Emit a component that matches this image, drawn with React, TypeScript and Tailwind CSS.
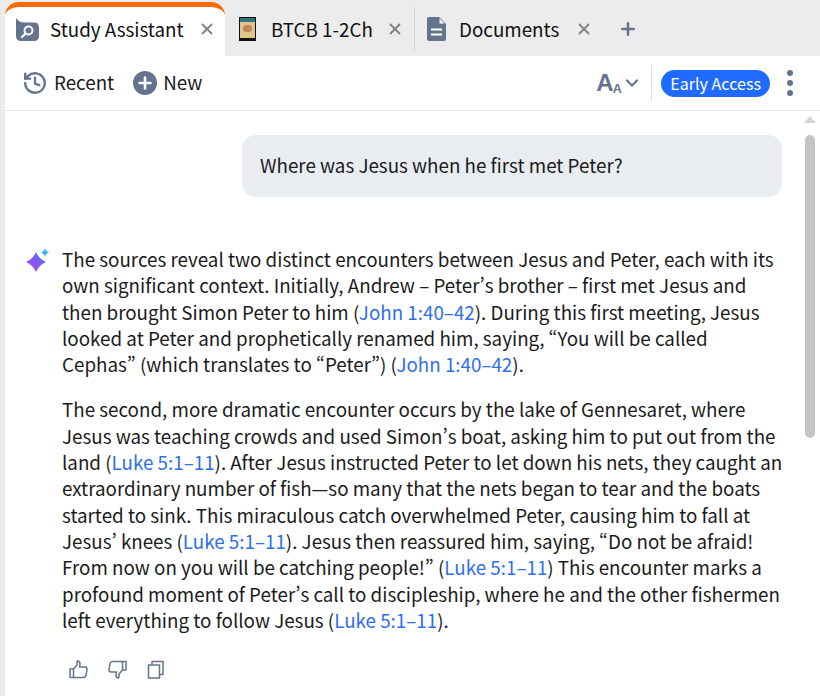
import { Plus, X, ChevronDown } from 'lucide-react';

const link = 'text-[#2f6fed]';

function Tab({ icon, label, width, last }: { icon: React.ReactNode; label: string; width: string; last?: boolean }) {
  return (
    <div className={`flex h-[44px] items-center ${width} ${last ? '' : 'border-r border-[#d0d0d0]'} self-center`}>
      <div className="flex w-full items-center">
        {icon}
        <span className="text-[18.8px] leading-none text-[#111]">{label}</span>
        <X className="ml-auto mr-[10px] shrink-0 text-[#808080]" size={18} strokeWidth={2.4} />
      </div>
    </div>
  );
}

export default function App() {
  return (
    <div className="h-[696px] w-[820px] overflow-hidden bg-[#ececec] font-['Noto_Sans_CJK_SC','Liberation_Sans',sans-serif] text-[#1b1b1b] [font-feature-settings:'pwid']">
      {/* tab strip */}
      <div className="flex h-[56px] items-end pl-[5px] pt-[2px]">
        <div className="flex h-[54px] w-[220px] shrink-0 items-center rounded-t-[14px] border-t-[5px] border-[#ff6a00] bg-white pb-[5px]">
          <svg className="ml-[10px] mr-[10px] mt-[1px] shrink-0" width="25" height="25" viewBox="0 0 25 25">
            <path fill="#64748f" d="M1 1 C3 4 6 5.5 9 5.5 H19 Q24 5.5 24 10.5 V19 Q24 24 19 24 H6 Q1 24 1 19 Z" />
            <circle cx="13.5" cy="13.5" r="4" fill="none" stroke="#fff" strokeWidth="2" />
            <path d="M10.5 16.5 L7 20" stroke="#fff" strokeWidth="2.2" strokeLinecap="round" />
          </svg>
          <span className="text-[18.8px] leading-none text-[#111]">Study Assistant</span>
          <X className="ml-auto mr-[9px] shrink-0 text-[#808080]" size={18} strokeWidth={2.4} />
        </div>
        <div className="flex h-[54px] flex-1 items-center">
          <Tab
            width="w-[190px]"
            label="BTCB 1-2Ch"
            icon={
              <span className="ml-[14px] mr-[15px] flex h-[24px] w-[17px] shrink-0 flex-col bg-[#111] p-[1px]">
                <span className="flex h-[20px] flex-col items-center bg-[#e3c48a]">
                  <span className="h-[4px] w-full bg-[#2f7482]" />
                  <span className="mt-[3px] h-[7px] w-[9px] rounded-full bg-[#c0865a]" />
                </span>
              </span>
            }
          />
          <Tab
            last
            width="w-[188px]"
            label="Documents"
            icon={
              <svg className="ml-[12px] mr-[13px] shrink-0" width="19" height="24" viewBox="0 0 19 24">
                <path fill="#64748f" d="M2 0 H12 L19 7 V22 Q19 24 17 24 H2 Q0 24 0 22 V2 Q0 0 2 0 Z" />
                <path fill="#fff" d="M12.5 1.5 L17.5 6.5 H12.5 Z" />
                <path d="M4 12.5 H15 M4 17.5 H15" stroke="#fff" strokeWidth="2" />
              </svg>
            }
          />
          <Plus className="ml-[15px] shrink-0 text-[#64748f]" size={20} strokeWidth={3} />
        </div>
      </div>

      <div className="ml-[5px] h-[640px] bg-white">
        {/* toolbar */}
        <div className="flex h-[55px] items-center border-b border-[#e4e4e4] pl-[17px] pr-[27px]">
          <svg width="26" height="26" viewBox="0 0 24 24" fill="none" stroke="#64748f" strokeWidth="2.2" strokeLinecap="round" strokeLinejoin="round">
            <path d="M3 12a9 9 0 1 0 2.8-6.5L3 8" />
            <path d="M3 3.5V8h4.5" />
            <path d="M12 7v5.5l4 1.5" />
          </svg>
          <span className="mb-[2px] ml-[6px] text-[18.8px] leading-none">Recent</span>
          <svg className="ml-[19px]" width="24" height="24" viewBox="0 0 24 24">
            <circle cx="12" cy="12" r="12" fill="#64748f" />
            <path d="M12 6.5v11M6.5 12h11" stroke="#fff" strokeWidth="2.6" strokeLinecap="round" />
          </svg>
          <span className="mb-[2px] ml-[6px] text-[18.8px] leading-none">New</span>
          <div className="ml-auto flex items-center">
            <span className="flex items-end font-['Liberation_Sans',sans-serif] font-bold leading-none tracking-[-1px] text-[#64748f]">
              <span className="text-[24px]">A</span>
              <span className="text-[12.5px]">A</span>
            </span>
            <ChevronDown className="ml-[1px] text-[#64748f]" size={20} strokeWidth={2.6} />
            <span className="ml-[9px] mr-[9.5px] h-[36px] w-px bg-[#dddddd]" />
            <span className="flex h-[27px] items-center rounded-full bg-[#1f6bff] px-[9px] text-[16.1px] leading-none text-white">Early Access</span>
            <span className="ml-[17px] flex flex-col gap-[4px]">
              <span className="h-[6px] w-[6px] rounded-full bg-[#64748f]" />
              <span className="h-[6px] w-[6px] rounded-full bg-[#64748f]" />
              <span className="h-[6px] w-[6px] rounded-full bg-[#64748f]" />
            </span>
          </div>
        </div>

        {/* conversation */}
        <div className="flex h-[585px]">
          <div className="w-[795px] shrink-0">
            <div className="mt-[24px] ml-[237px] flex h-[62px] w-[540px] items-center rounded-[14px] bg-[#e9edf2] pb-[2px] pl-[18px] text-[18.8px] leading-[26px]">
              Where was Jesus when he first met Peter?
            </div>
            <div className="mt-[49px] flex">
              <svg className="ml-[19px] mt-[2px] shrink-0" width="26" height="26" viewBox="0 0 26 26">
                <defs>
                  <linearGradient id="spark" x1="1" y1="0" x2="0" y2="1">
                    <stop offset="0" stopColor="#3f7bff" />
                    <stop offset="1" stopColor="#c03be8" />
                  </linearGradient>
                </defs>
                <path fill="url(#spark)" d="M12 4 Q15 11 22 14 Q15 17 12 24 Q9 17 2 14 Q9 11 12 4 Z" />
                <path fill="#35b8ff" d="M21 0.5 Q22 3.5 25 4.5 Q22 5.5 21 8.5 Q20 5.5 17 4.5 Q20 3.5 21 0.5 Z" />
              </svg>
              <div className="ml-[12px] w-[722px] text-[18.8px] leading-[26.3px]">
                <p>
                  The sources reveal two distinct encounters between Jesus and Peter, each with its own significant context. Initially, Andrew – Peter’s brother – first met Jesus and then brought Simon Peter to him (<span className={link}>John 1:40–42</span>). During this first meeting, Jesus looked at Peter and prophetically renamed him, saying, “You will be called Cephas” (which translates to “Peter”) (<span className={link}>John 1:40–42</span>).
                </p>
                <p className="mt-[19px]">
                  The second, more dramatic encounter occurs by the lake of Gennesaret, where Jesus was teaching crowds and used Simon’s boat, asking him to put out from the land (<span className={link}>Luke 5:1–11</span>). After Jesus instructed Peter to let down his nets, they caught an extraordinary number of fish—so many that the nets began to tear and the boats started to sink. This miraculous catch overwhelmed Peter, causing him to fall at Jesus’ knees (<span className={link}>Luke 5:1–11</span>). Jesus then reassured him, saying, “Do not be afraid! From now on you will be catching people!” (<span className={link}>Luke 5:1–11</span>) This encounter marks a profound moment of Peter’s call to discipleship, where he and the other fishermen left everything to follow Jesus (<span className={link}>Luke 5:1–11</span>).
                </p>
                <div className="mt-[27px] flex gap-[20px] pl-[7px]">
                  <svg width="19" height="19" viewBox="0 0 19 19" fill="none" stroke="#64748f" strokeWidth="1.5" strokeLinejoin="round">
                    <path d="M1 9 H4.5 V17.5 H1 Z" />
                    <path d="M4.5 9 L8 5 V1.5 Q8 1 9 1 Q11 1.5 11 4 L10.5 7 H16 Q18 7 18 9.5 L17 15.5 Q16.5 17.5 14.5 17.5 H4.5" />
                  </svg>
                  <svg width="19" height="19" viewBox="0 0 19 19" fill="none" stroke="#64748f" strokeWidth="1.5" strokeLinejoin="round">
                    <path d="M14.5 1.5 H18 V10 H14.5 Z" />
                    <path d="M14.5 10 L11 14 V17 Q11 18 10 18 Q8 17.5 8 15 L8.5 12 H3 Q1 12 1 9.5 L2 3.5 Q2.5 1.5 4.5 1.5 H14.5" />
                  </svg>
                  <svg width="19" height="19" viewBox="0 0 19 19" fill="none" stroke="#64748f" strokeWidth="1.5" strokeLinejoin="round">
                    <path d="M1.5 5 H12.5 V18 H1.5 Z" />
                    <path d="M5 5 V1.5 H16 V14.5 H12.5" />
                  </svg>
                </div>
              </div>
            </div>
          </div>
          {/* scrollbar */}
          <div className="flex w-[20px] flex-col items-center pt-[5px]">
            <span className="h-0 w-0 border-x-[6px] border-b-[7px] border-x-transparent border-b-[#d6d6d6]" />
            <span className="mt-[12px] h-[303px] w-[10px] rounded-full bg-[#c4c4c4]" />
          </div>
        </div>
      </div>
    </div>
  );
}
